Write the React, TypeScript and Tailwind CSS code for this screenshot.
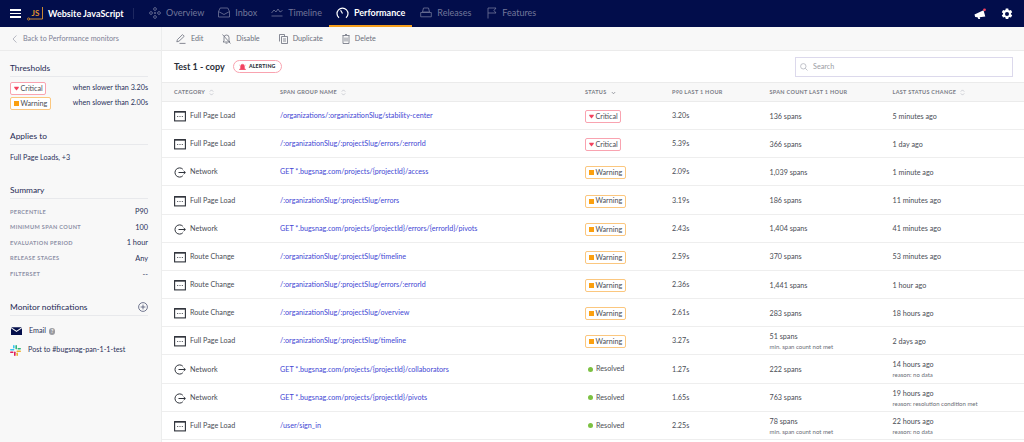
import React from "react";

const Dots = () => (
  <svg width="12" height="11" viewBox="0 0 12 11" className="shrink-0">
    <rect x="0.6" y="0.6" width="10.8" height="9.3" fill="none" stroke="#2d3139" strokeWidth="1.1" />
    <rect x="0.6" y="0.6" width="10.8" height="1" fill="#2d3139" />
    <circle cx="3.7" cy="5.5" r="0.6" fill="#2d3139" />
    <circle cx="6" cy="5.5" r="0.6" fill="#2d3139" />
    <circle cx="8.3" cy="5.5" r="0.6" fill="#2d3139" />
  </svg>
);

const Net = () => (
  <svg width="12" height="11" viewBox="0 0 12 11" className="shrink-0" fill="none" stroke="#2d3139" strokeWidth="1">
    <path d="M8.8 2.2A4.6 4.6 0 1 0 8.8 8.8" />
    <path d="M4.5 5.5H11.3M9.6 3.9L11.3 5.5L9.6 7.1" />
  </svg>
);

const Sort = () => (
  <svg width="5" height="7" viewBox="0 0 5 7" className="ml-[4px] shrink-0" fill="none" stroke="#b9bcc4" strokeWidth="0.7">
    <path d="M0.8 2.6L2.5 0.9L4.2 2.6M0.8 4.4L2.5 6.1L4.2 4.4" />
  </svg>
);

const Critical = () => (
  <span className="inline-flex h-[13px] items-center gap-[2px] rounded-[2px] border border-[#f9a3b0] bg-white pl-[2.5px] pr-[2.5px] text-[7.2px] leading-none text-[#4a4d55]">
    <svg width="5" height="5" viewBox="0 0 6 5"><path d="M0.3 0.3H5.7V1.6L3 4.8L0.3 1.6Z" fill="#f2435f" /></svg>
    Critical
  </span>
);

const Warning = () => (
  <span className="inline-flex h-[13px] items-center gap-[2px] rounded-[2px] border border-[#fbc77f] bg-white pl-[2.5px] pr-[2.5px] text-[7.2px] leading-none text-[#4a4d55]">
    <span className="h-[5px] w-[5px] bg-[#fb9f0e]" />
    Warning
  </span>
);

const Resolved = () => (
  <span className="inline-flex items-center gap-[3px] pl-[3px] text-[7.2px] leading-none text-[#4a4d55]">
    <span className="h-[5px] w-[5px] rounded-full bg-[#7cc142]" />
    Resolved
  </span>
);

type Row = {
  cat: "F" | "N" | "R";
  name: string;
  status: "C" | "W" | "R";
  p: string;
  spans: string;
  spanNote?: string;
  change: string;
  note?: string;
};

const rows: Row[] = [
  { cat: "F", name: "/organizations/:organizationSlug/stability-center", status: "C", p: "3.20s", spans: "136 spans", change: "5 minutes ago" },
  { cat: "F", name: "/:organizationSlug/:projectSlug/errors/:errorId", status: "C", p: "5.39s", spans: "366 spans", change: "1 day ago" },
  { cat: "N", name: "GET *.bugsnag.com/projects/{projectId}/access", status: "W", p: "2.09s", spans: "1,039 spans", change: "1 minute ago" },
  { cat: "F", name: "/:organizationSlug/:projectSlug/errors", status: "W", p: "3.19s", spans: "186 spans", change: "11 minutes ago" },
  { cat: "N", name: "GET *.bugsnag.com/projects/{projectId}/errors/{errorId}/pivots", status: "W", p: "2.43s", spans: "1,404 spans", change: "41 minutes ago" },
  { cat: "R", name: "/:organizationSlug/:projectSlug/timeline", status: "W", p: "2.59s", spans: "370 spans", change: "53 minutes ago" },
  { cat: "R", name: "/:organizationSlug/:projectSlug/errors/:errorId", status: "W", p: "2.36s", spans: "1,441 spans", change: "1 hour ago" },
  { cat: "R", name: "/:organizationSlug/:projectSlug/overview", status: "W", p: "2.61s", spans: "283 spans", change: "18 hours ago" },
  { cat: "F", name: "/:organizationSlug/:projectSlug/timeline", status: "W", p: "3.27s", spans: "51 spans", spanNote: "min. span count not met", change: "2 days ago" },
  { cat: "N", name: "GET *.bugsnag.com/projects/{projectId}/collaborators", status: "R", p: "1.27s", spans: "222 spans", change: "14 hours ago", note: "reason: no data" },
  { cat: "N", name: "GET *.bugsnag.com/projects/{projectId}/pivots", status: "R", p: "1.65s", spans: "763 spans", change: "19 hours ago", note: "reason: resolution condition met" },
  { cat: "F", name: "/user/sign_in", status: "R", p: "2.25s", spans: "78 spans", spanNote: "min. span count not met", change: "22 hours ago", note: "reason: no data" },
];

const catName = { F: "Full Page Load", N: "Network", R: "Route Change" };

const NavItem = ({ icon, label, active, extra }: { icon: React.ReactNode; label: string; active?: boolean; extra?: string }) => (
  <div className={`flex h-[27px] items-center gap-[5px] border-b-2 px-[7px] ${extra ?? ""} ${active ? "border-[#f59e1c] text-white" : "border-transparent text-[#72779a]"}`}>
    {icon}
    <span className={`text-[9px] ${active ? "font-bold" : ""}`}>{label}</span>
  </div>
);

const SideHead = ({ children, extra }: { children: React.ReactNode; extra?: React.ReactNode }) => (
  <div className="flex h-[14px] items-center justify-between border-b border-[#e8e9ec] pb-[2px] text-[8.4px] text-[#1f2a55]">
    <span>{children}</span>
    {extra}
  </div>
);

const Sum = ({ a, b }: { a: string; b: string }) => (
  <div className="flex h-[15.6px] items-center justify-between">
    <span className="text-[5.6px] font-bold tracking-[0.35px] text-[#8d90a6]">{a}</span>
    <span className="text-[7.4px] text-[#2a3058]">{b}</span>
  </div>
);

const Tool = ({ icon, label }: { icon: React.ReactNode; label: string }) => (
  <div className="flex items-center gap-[5px] text-[7.2px] text-[#6b6f7c]">
    {icon}
    {label}
  </div>
);

export default function App() {
  const s = { fill: "none", stroke: "currentColor", strokeWidth: 0.8 };
  return (
    <div className="flex h-[442px] w-[1024px] flex-col overflow-hidden bg-white font-['Lato','Noto_Sans',sans-serif]">
      <header className="flex h-[27px] shrink-0 items-center bg-[#020d4b]">
        <div className="ml-[10px] flex w-[11px] flex-col gap-[2px]">
          <span className="h-[1.5px] bg-white" />
          <span className="h-[1.5px] bg-white" />
          <span className="h-[1.5px] bg-white" />
        </div>
        <svg width="17" height="15" viewBox="0 0 17 15" className="ml-[6px]">
          <path d="M2.6 13H15.5V1" fill="none" stroke="#e0952f" strokeWidth="0.9" />
          <circle cx="1.6" cy="13" r="1.1" fill="none" stroke="#e0952f" strokeWidth="0.8" />
          <text x="4.5" y="10" fontSize="8" fontWeight="700" fill="#e0952f" fontFamily="Lato">JS</text>
        </svg>
        <span className="ml-[4px] w-[76px] whitespace-nowrap text-[9px] font-bold text-white">Website JavaScript</span>
        <span className="ml-[9px] h-[11px] w-px bg-[#1e2860]" />
        <div className="ml-[8px] flex items-center">
          <NavItem label="Overview" icon={<svg width="12" height="12" viewBox="0 0 12 12" {...s}><circle cx="6" cy="2" r="1.4" /><circle cx="2" cy="6" r="1.4" /><circle cx="10" cy="6" r="1.4" /><circle cx="6" cy="10" r="1.4" /><circle cx="6" cy="6" r="0.7" /></svg>} />
          <NavItem label="Inbox" icon={<svg width="12" height="11" viewBox="0 0 12 11" {...s}><path d="M2.2 1H9.8L11.5 4.5V10H0.5V4.5Z" /><path d="M0.5 4.5L6 7.5L11.5 4.5" /></svg>} />
          <NavItem label="Timeline" icon={<svg width="12" height="9" viewBox="0 0 12 9" {...s}><path d="M0.5 5L3 2L5 4L7 1L9 4L11.5 2.5" /><path d="M0.5 8H11.5" /></svg>} />
          <NavItem active label="Performance" icon={<svg width="13" height="12" viewBox="0 0 13 12" fill="none" stroke="currentColor" strokeWidth="1.2"><path d="M3 10.8A5.5 5.5 0 1 1 10 10.8" /><path d="M6.5 6.5L4.6 3.3" /></svg>} />
          <NavItem extra="ml-[1px]" label="Releases" icon={<svg width="12" height="11" viewBox="0 0 12 11" {...s}><path d="M3.5 1H8.5L9.5 5H2.5Z" /><path d="M0.7 5.5H11.3V9.8H0.7Z" /></svg>} />
          <NavItem extra="ml-[2px]" label="Features" icon={<svg width="10" height="12" viewBox="0 0 10 12" {...s}><path d="M1 11.5V1H9L7 3.5L9 6H1" /></svg>} />
        </div>
        <div className="ml-auto flex items-center">
          <svg width="13" height="12" viewBox="0 0 13 12" className="mr-[14px]">
            <path d="M0.5 6.5L9.5 2.2L11.3 8.5L5.7 9.2L6.2 11H4.4L3.5 9.2L1.2 9Z" fill="#fff" />
            <circle cx="10.5" cy="1.8" r="1.4" fill="#f2435f" />
          </svg>
          <svg width="12" height="12" viewBox="0 0 24 24" className="mr-[11px]">
            <path fillRule="evenodd" fill="#fff" d="M14.5 1h-5l-.6 3.2-1.7 1-3.1-1.1L1.6 8.4l2.5 2.1v2l-2.5 2.1 2.5 4.3 3.1-1.1 1.7 1 .6 3.2h5l.6-3.2 1.7-1 3.1 1.1 2.5-4.3-2.5-2.1v-2l2.5-2.1-2.5-4.3-3.1 1.1-1.7-1zM12 8a4 4 0 1 1 0 8 4 4 0 0 1 0-8z" />
          </svg>
        </div>
      </header>

      <div className="flex min-h-0 flex-1">
        <aside className="flex w-[162px] shrink-0 flex-col border-r border-[#eceded] bg-[#f8f8f8]">
          <div className="flex h-[24px] shrink-0 items-center gap-[6px] border-b border-[#ebebeb] pl-[12px] pt-[1px] text-[7.2px] text-[#7d8196]">
            <svg width="5" height="8" viewBox="0 0 5 8" fill="none" stroke="#a4a7b4" strokeWidth="0.8"><path d="M4.4 0.5L1 4L4.4 7.5" /></svg>
            Back to Performance monitors
          </div>
          <div className="flex flex-col px-[10px] pr-[13px] pt-[12px]">
            <SideHead>Thresholds</SideHead>
            <div className="mt-[4px] flex h-[15px] items-center justify-between">
              <Critical />
              <span className="text-[7.2px] text-[#2a3058]">when slower than 3.20s</span>
            </div>
            <div className="flex h-[15px] items-center justify-between">
              <Warning />
              <span className="text-[7.2px] text-[#2a3058]">when slower than 2.00s</span>
            </div>

            <div className="mt-[20px]"><SideHead>Applies to</SideHead></div>
            <div className="mt-[7px] text-[7.2px] leading-[11px] text-[#2a3058]">Full Page Loads, +3</div>

            <div className="mt-[22px]"><SideHead>Summary</SideHead></div>
            <div className="mt-[5px]">
              <Sum a="PERCENTILE" b="P90" />
              <Sum a="MINIMUM SPAN COUNT" b="100" />
              <Sum a="EVALUATION PERIOD" b="1 hour" />
              <Sum a="RELEASE STAGES" b="Any" />
              <Sum a="FILTERSET" b="--" />
            </div>

            <div className="mt-[20px]">
              <SideHead extra={
                <svg width="10" height="10" viewBox="0 0 10 10" fill="none" stroke="#3b4266" strokeWidth="0.7"><circle cx="5" cy="5" r="4.4" /><path d="M5 2.6V7.4M2.6 5H7.4" /></svg>
              }>Monitor notifications</SideHead>
            </div>
            <div className="mt-[10px] flex items-center text-[7.2px] text-[#2a3058]">
              <svg width="11" height="8" viewBox="0 0 11 8" className="ml-px"><path d="M0.2 0.2H10.8L5.5 3.8Z M0 1.3L5.5 5L11 1.3V8H0Z" fill="#040f4b" /></svg>
              <span className="ml-[7px]">Email</span>
              <span className="ml-[3px] flex h-[6.5px] w-[6.5px] items-center justify-center rounded-full bg-[#9a9ba1] text-[5px] font-bold leading-none text-white">?</span>
            </div>
            <div className="mt-[8px] flex items-center text-[7.2px] text-[#2a3058]">
              <svg width="11" height="11" viewBox="0 0 11 11">
                <rect x="0" y="4" width="4.4" height="1.6" rx="0.8" fill="#36c5f0" />
                <rect x="3" y="0" width="1.6" height="3.6" rx="0.8" fill="#36c5f0" />
                <rect x="5.4" y="0" width="1.6" height="4.4" rx="0.8" fill="#2eb67d" />
                <rect x="7.4" y="3" width="3.6" height="1.6" rx="0.8" fill="#2eb67d" />
                <rect x="6.4" y="5.4" width="4.6" height="1.6" rx="0.8" fill="#ecb22e" />
                <rect x="6.4" y="7.4" width="1.6" height="3.6" rx="0.8" fill="#ecb22e" />
                <rect x="4" y="6.4" width="1.6" height="4.6" rx="0.8" fill="#e01e5a" />
                <rect x="0" y="6.4" width="3.6" height="1.6" rx="0.8" fill="#e01e5a" />
              </svg>
              <span className="ml-[7px] whitespace-nowrap">Post to #bugsnag-pan-1-1-test</span>
            </div>
          </div>
        </aside>

        <main className="flex min-w-0 flex-1 flex-col">
          <div className="flex h-[24px] shrink-0 items-center gap-[19px] border-b border-[#ebebeb] bg-[#f8f8f8] pl-[14px] pt-[1px] text-[#8b8e99]">
            <Tool label="Edit" icon={<svg width="10" height="10" viewBox="0 0 10 10" {...s}><path d="M0.8 7.8L1.4 5.6L6.5 0.6L8.2 2.3L3 7.2Z" /><path d="M3.5 9.4H9.5" /></svg>} />
            <Tool label="Disable" icon={<svg width="9" height="10" viewBox="0 0 9 10" {...s}><path d="M2 7V3.5A2.5 2.5 0 0 1 7 3.5V7L8 8H1ZM3.5 9.2H5.5M0.5 0.5L8.5 9.5" /></svg>} />
            <Tool label="Duplicate" icon={<svg width="9" height="10" viewBox="0 0 9 10" {...s}><path d="M0.5 7.5V0.5H5.5V2.5M2.5 2.5H8.5V9.5H2.5V2.5ZM4 5H7M4 7H7" /></svg>} />
            <Tool label="Delete" icon={<svg width="8" height="10" viewBox="0 0 8 10" {...s}><path d="M0.5 1.5H7.5M1 1.5V9.5H7V1.5M3 0.5H5M3 3.5V7.5M5 3.5V7.5" /></svg>} />
          </div>
          <div className="flex h-[32px] shrink-0 items-center border-b border-[#ebebeb] pl-[12px]">
            <span className="text-[9px] font-bold text-[#2b2e38]">Test 1 - copy</span>
            <span className="ml-[8px] flex h-[13px] w-[49px] items-center justify-center gap-[3px] rounded-full border border-[#f9a3b0] text-[5.2px] font-black tracking-[0.2px] text-[#2b2e38]">
              <svg width="7" height="7" viewBox="0 0 7 7"><path d="M1.5 6V3.2A2 2 0 0 1 5.5 3.2V6Z M0.5 6H6.5V6.8H0.5Z M0.2 2L1 2.5M6.8 2L6 2.5" fill="#f2435f" stroke="#f2435f" strokeWidth="0.4" /></svg>
              ALERTING
            </span>
            <div className="ml-auto mr-[11px] flex h-[20px] w-[218px] items-center gap-[5px] border border-[#dcd9ec] bg-white pl-[4px] pt-[1px] text-[7.2px] text-[#9b9ca4]">
              <svg width="8" height="8" viewBox="0 0 8 8" fill="none" stroke="#a8abb5" strokeWidth="0.7"><circle cx="3.3" cy="3.3" r="2.7" /><path d="M5.3 5.3L7.5 7.5" /></svg>
              Search
            </div>
          </div>
          <div className="flex h-[19px] shrink-0 items-center border-b border-[#ebebeb] bg-[#f8f8f8] pl-[12px] pt-[1px] text-[5.5px] font-bold tracking-[0.3px] text-[#7a7c86]">
            <div className="flex w-[106px] items-center">CATEGORY<Sort /></div>
            <div className="flex w-[305px] items-center">SPAN GROUP NAME<Sort /></div>
            <div className="flex w-[87px] items-center">STATUS
              <svg width="5" height="4" viewBox="0 0 5 4" className="ml-[4px]" fill="none" stroke="#7a7c86" strokeWidth="0.7"><path d="M0.8 1L2.5 2.8L4.2 1" /></svg>
            </div>
            <div className="w-[97.5px]">P90 LAST 1 HOUR</div>
            <div className="w-[123px]">SPAN COUNT LAST 1 HOUR</div>
            <div className="flex items-center">LAST STATUS CHANGE<Sort /></div>
          </div>
          {rows.map((r, i) => (
            <div key={i} className="flex h-[28.17px] shrink-0 items-center border-b border-[#eeeeee] pl-[12px] pt-[2px] text-[7.2px] text-[#4a4d55]">
              <div className="flex w-[106px] items-center gap-[4px]">
                {r.cat === "N" ? <Net /> : <Dots />}
                {catName[r.cat]}
              </div>
              <div className="w-[305px] whitespace-nowrap text-[#4347d4]">{r.name}</div>
              <div className="w-[87px]">
                {r.status === "C" ? <Critical /> : r.status === "W" ? <Warning /> : <Resolved />}
              </div>
              <div className="w-[97.5px]">{r.p}</div>
              <div className="w-[123px]">
                <div className="leading-[10px]">{r.spans}</div>
                {r.spanNote && <div className="text-[6px] leading-[9px] text-[#6a6c75]">{r.spanNote}</div>}
              </div>
              <div>
                <div className="leading-[10px]">{r.change}</div>
                {r.note && <div className="text-[6px] leading-[9px] text-[#6a6c75]">{r.note}</div>}
              </div>
            </div>
          ))}
        </main>
      </div>
    </div>
  );
}
